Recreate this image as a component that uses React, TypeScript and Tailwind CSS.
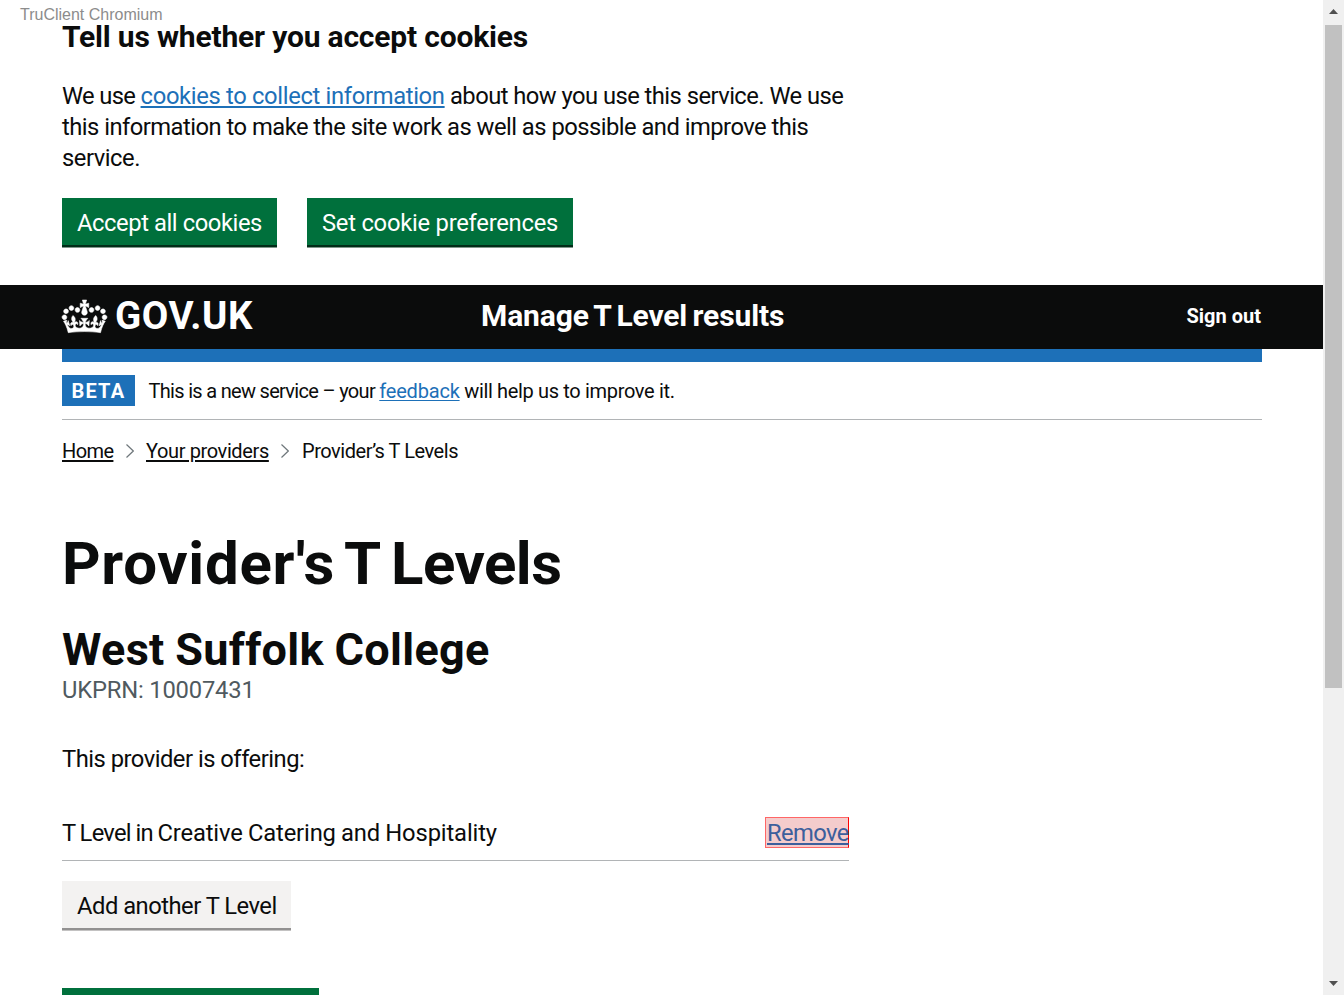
import type { ReactNode } from "react";

function Crown() {
  return (
    <svg
      viewBox="0 0 132 97"
      className="h-[33px] w-[45px] shrink-0 overflow-visible"
      fill="currentColor"
      stroke="currentColor"
      strokeWidth="1.6"
      aria-hidden="true"
    >
      <path
        fillRule="evenodd"
        d="M25 30.2c3.5 1.5 7.7-.2 9.1-3.7 1.5-3.6-.2-7.8-3.9-9.2-3.6-1.4-7.6.3-9.1 3.9-1.4 3.5.3 7.5 3.9 9zM9 39.5c3.6 1.5 7.8-.2 9.2-3.7 1.5-3.6-.2-7.8-3.9-9.1-3.6-1.5-7.6.2-9.1 3.8-1.4 3.5.3 7.5 3.8 9zM4.4 57.2c3.5 1.5 7.7-.2 9.1-3.8 1.5-3.6-.2-7.7-3.9-9.1-3.5-1.5-7.6.3-9.1 3.8-1.4 3.5.3 7.6 3.9 9.1zm38.3-21.4c3.5 1.5 7.7-.2 9.1-3.8 1.5-3.6-.2-7.7-3.9-9.1-3.6-1.5-7.6.3-9.1 3.8-1.3 3.6.4 7.7 3.9 9.1zm64.4-5.6c-3.6 1.5-7.8-.2-9.1-3.7-1.5-3.6.2-7.8 3.8-9.2 3.6-1.4 7.7.3 9.2 3.9 1.3 3.5-.4 7.5-3.9 9zm15.9 9.3c-3.6 1.5-7.7-.2-9.1-3.7-1.5-3.6.2-7.8 3.7-9.1 3.6-1.5 7.7.2 9.2 3.8 1.5 3.5-.3 7.5-3.8 9zm4.7 17.7c-3.6 1.5-7.8-.2-9.2-3.8-1.5-3.6.2-7.7 3.9-9.1 3.6-1.5 7.7.3 9.2 3.8 1.3 3.5-.4 7.6-3.9 9.1zM89.3 35.8c-3.6 1.5-7.8-.2-9.2-3.8-1.4-3.6.2-7.7 3.9-9.1 3.6-1.5 7.7.3 9.2 3.8 1.4 3.6-.3 7.7-3.9 9.1zM69.7 17.7l8.9 4.7V9.3l-8.9 2.8c-.2-.3-.5-.6-.9-.9L72.4 0H59.6l3.5 11.2c-.3.3-.6.5-.9.9l-8.8-2.8v13.1l8.8-4.7c.3.3.6.7.9.9l-5 15.4v.1c-.2.8-.4 1.6-.4 2.4 0 4.1 3.1 7.5 7 8.1h.2c.3 0 .7.1 1 .1.4 0 .7 0 1-.1h.2c4-.6 7.1-4.1 7.1-8.1 0-.8-.1-1.7-.4-2.4V34l-5.1-15.4c.4-.2.7-.6 1-.9zM66 92.8c16.9 0 32.8 1.1 47.1 3.2 4-16.9 8.9-26.7 14-33.5l-9.6-3.4c1 4.9 1.1 7.2 0 10.2-1.5-1.4-3-4.3-4.2-8.7L108.6 76c2.8-2 5-3.2 7.5-3.3-4.4 9.4-10 11.9-13.6 11.2-4.3-.8-6.3-4.6-5.6-7.9 1-4.7 5.7-5.9 8-.5 4.3-8.7-3-11.4-7.6-8.8 7.1-7.2 7.9-13.5 2.1-21.1-8 6.1-8.1 12.3-4.5 20.8-4.7-5.4-12.1-2.5-9.5 6.2 3.4-5.2 7.9-2 7.2 3.1-.6 4.3-6.4 7.8-13.5 7.2-10.3-.9-10.9-8-11.2-13.8 2.5-.5 7.1 1.8 11 7.3L80.2 60c-4.1 4.4-8 5.3-12.3 5.4 1.4-4.4 8-11.6 8-11.6H55.5s6.4 7.2 7.9 11.6c-4.2-.1-8-1-12.3-5.4l1.4 16.4c3.9-5.5 8.5-7.7 10.9-7.3-.3 5.8-.9 12.8-11.1 13.8-7.2.6-12.9-2.9-13.5-7.2-.7-5 3.8-8.3 7.1-3.1 2.7-8.7-4.6-11.6-9.4-6.2 3.7-8.5 3.6-14.7-4.6-20.8-5.8 7.6-5 13.9 2.2 21.1-4.7-2.6-11.9.1-7.7 8.8 2.3-5.5 7.1-4.2 8.1.5.7 3.3-1.3 7.1-5.7 7.9-3.5.7-9-1.8-13.5-11.2 2.5.1 4.7 1.3 7.5 3.3l-4.7-15.4c-1.2 4.4-2.7 7.2-4.3 8.7-1.1-3-.9-5.3 0-10.2l-9.5 3.4c5 6.9 9.9 16.7 14 33.5 14.8-2.1 30.8-3.2 47.7-3.2z"
      />
    </svg>
  );
}

function GreenButton({ className, children }: { className: string; children?: ReactNode }) {
  return (
    <button
      className={`h-[47px] shrink-0 whitespace-nowrap bg-[#00703c] pt-[3px] pl-[15px] text-left text-[23.75px] leading-[44px] text-white shadow-[0_2px_0_#002d18,0_3px_0_#80968b] ${className}`}
    >
      {children}
    </button>
  );
}

function Chevron() {
  return (
    <svg viewBox="0 0 8 16" className="mt-px h-4 w-2" fill="none" stroke="#6f777b" strokeWidth="1.2" aria-hidden="true">
      <path d="M.5 1.5 7.3 8 .5 14.5" />
    </svg>
  );
}

function CookieBanner() {
  return (
    <section className="h-[285px] pt-[18px] pl-[62px]">
      <h2 className="h-[63px] text-[30px] leading-[38px] font-bold tracking-[-0.18px]">
        Tell us whether you accept cookies
      </h2>
      <p className="h-[117px] text-[23.75px] leading-[31px] whitespace-nowrap">
        <span className="block">
          <span className="tracking-[-0.64px]">We use </span>
          <a className="tracking-[-0.33px] text-[#1d70b8] underline decoration-2 underline-offset-2">
            cookies to collect information
          </a>
          <span className="tracking-[-0.54px]"> about how you use this service. We use</span>
        </span>
        <span className="block tracking-[-0.52px]">
          this information to make the site work as well as possible and improve this
        </span>
        <span className="block tracking-[-0.46px]">service.</span>
      </p>
      <div className="flex gap-[30px]">
        <GreenButton className="w-[215px] tracking-[-0.42px]">Accept all cookies</GreenButton>
        <GreenButton className="w-[266px] tracking-[-0.24px]">Set cookie preferences</GreenButton>
      </div>
    </section>
  );
}

function Header() {
  return (
    <header className="bg-[#0b0c0c] text-white">
      <div className="flex h-16 pr-[62px] pl-[62px] font-bold whitespace-nowrap">
        <div className="flex w-[419px] pt-[15px]">
          <Crown />
          <span className="-mt-[15px] ml-2 h-[62px] text-[38.5px] leading-[61px] tracking-[0.6px]">GOV.UK</span>
        </div>
        <span className="flex-1 text-[30px] leading-[61px] tracking-[-0.12px] [word-spacing:-2px]">
          Manage T Level results
        </span>
        <span className="text-[20px] leading-[62px]">Sign out</span>
      </div>
    </header>
  );
}

function Banner() {
  return (
    <>
      <div className="mr-[61px] ml-[62px] h-[13px] bg-[#1d70b8]" />
      <div className="mr-[61px] ml-[62px] flex h-[58px] items-start border-b border-[#b1b4b6] pt-[13px] text-[20px] whitespace-nowrap">
        <strong className="h-[31px] w-[73px] bg-[#1d70b8] pl-[9.5px] leading-[33px] font-bold tracking-[1.2px] text-white">
          BETA
        </strong>
        <p className="ml-[13.5px] leading-[33px]">
          <span className="tracking-[-0.69px]">This is a new service – your </span>
          <a className="tracking-[-0.2px] text-[#1d70b8] underline decoration-1 underline-offset-2">feedback</a>
          <span className="tracking-[-0.34px]"> will help us to improve it.</span>
        </p>
      </div>
      <nav className="flex h-[61px] items-center pl-[62px] text-[20px] leading-[24px] whitespace-nowrap">
        <a className="w-[64px] tracking-[-0.6px] underline decoration-2 underline-offset-2">Home</a>
        <Chevron />
        <a className="ml-3 w-[135px] tracking-[-0.38px] underline decoration-2 underline-offset-2">Your providers</a>
        <Chevron />
        <span className="ml-[13px] tracking-[-0.46px]">Provider’s T Levels</span>
      </nav>
    </>
  );
}

function Main() {
  return (
    <main className="w-[849px] pt-[43px] pl-[62px] whitespace-nowrap">
      <h1 className="h-[91px] text-[60px] leading-[80px] font-bold tracking-[0.7px] [word-spacing:-5px]">
        Provider's T <span className="tracking-[-0.5px]">Levels</span>
      </h1>
      <h2 className="h-[60px] text-[45px] leading-[70px] font-bold tracking-[0.33px] [word-spacing:-1px]">
        West Suffolk College
      </h2>
      <p className="h-[69px] text-[23.75px] leading-[31px] tracking-[-0.18px] text-[#505a5f]">UKPRN: 10007431</p>
      <p className="h-[74px] text-[23.75px] leading-[31px] tracking-[-0.5px]">This provider is offering:</p>
      <div className="flex h-[43px] justify-between border-b border-[#b1b4b6] text-[23.75px] leading-[31px]">
        <span className="tracking-[-0.14px] [word-spacing:-0.5px]">
          <span className="tracking-[-0.75px]">T Level in </span>
          Creative Catering and Hospitality
        </span>
        <a className="-mt-px h-[31px] w-[84px] border border-r-[#ff0000] border-[#ff6666] bg-[#f4cccc] pl-px leading-[31px] tracking-[-0.6px] text-[#3d5f9c] underline decoration-2 underline-offset-2">
          Remove
        </a>
      </div>
      <button className="mt-5 block h-[47px] w-[229px] bg-[#f3f2f1] pt-[3px] pl-[15px] text-left text-[23.75px] leading-[44px] tracking-[-0.5px] shadow-[0_2px_0_#929191,0_3px_0_#c3c2c2]">
        Add another T Level
      </button>
      <div className="mt-[60px]">
        <GreenButton className="w-[257px]" />
      </div>
    </main>
  );
}

function Scrollbar() {
  return (
    <div className="flex w-[21px] shrink-0 flex-col items-center bg-[#f0f0f0] pr-px">
      <svg viewBox="0 0 9 5" className="mt-[9px] mb-[11px] h-[5px] w-[9px] shrink-0" fill="#505050" aria-hidden="true">
        <path d="M4.5 0 9 5H0z" />
      </svg>
      <div className="h-[663px] w-[17px] shrink-0 bg-[#c1c1c1]" />
      <svg viewBox="0 0 9 5" className="mt-auto mb-[9px] h-[5px] w-[9px] shrink-0" fill="#505050" aria-hidden="true">
        <path d="M0 0h9L4.5 5z" />
      </svg>
    </div>
  );
}

export default function App() {
  return (
    <div className="relative flex h-[995px] w-[1344px] overflow-hidden bg-white font-[Roboto,sans-serif] text-[#0b0c0c]">
      <div className="w-[1323px] shrink-0">
        <CookieBanner />
        <Header />
        <Banner />
        <Main />
      </div>
      <Scrollbar />
      <span className="absolute top-1.5 left-5 font-['Liberation_Sans',sans-serif] text-[16px] leading-[18px] text-[#8c8c8c]">
        TruClient Chromium
      </span>
    </div>
  );
}
